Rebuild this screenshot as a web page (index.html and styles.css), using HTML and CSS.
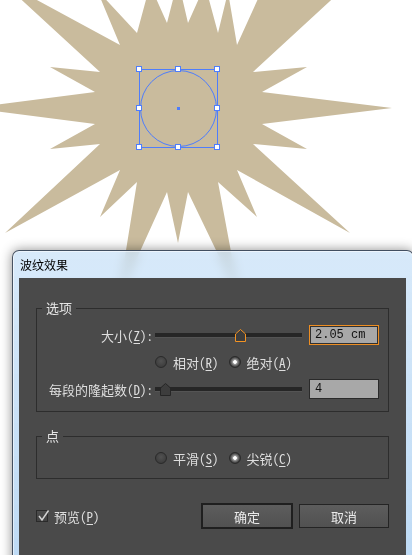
FILE: index.html
```html
<!DOCTYPE html>
<html lang="zh-CN">

<head>
    <meta charset="UTF-8">
    <meta name="viewport" content="width=device-width, initial-scale=1.0">
    <title>波纹效果</title>
    <link rel="stylesheet" href="styles.css">
</head>

<body>
    <div class="stage">
        <!-- Artboard: star with the selected circle -->
        <svg class="artboard" width="412" height="320" viewBox="0 0 412 320">
            <polygon class="star" points="0,-20 120,45 97,-10 137,33 150,-15 167,23 178,-20 188,23 205,-15 218,33 228,-8 237,45 262,-10 342,-10 253,72 307,67 262,92 392,108 262,124 307,149 253,144 350,233 237,170 257,217 218,182 240,300 188,192 178,243 167,192 118,300 137,182 100,217 120,170 5,233 100,144 50,149 95,124 -30,108 95,92 50,67 100,72" />
            <g class="selection">
                <rect x="139.5" y="69.5" width="78" height="78" />
                <circle cx="178.5" cy="108.5" r="38" />
                <rect class="center" x="177" y="107" width="3" height="3" />
                <rect class="handle" x="136.5" y="66.5" width="5" height="5" />
                <rect class="handle" x="175.5" y="66.5" width="5" height="5" />
                <rect class="handle" x="214.5" y="66.5" width="5" height="5" />
                <rect class="handle" x="136.5" y="105.5" width="5" height="5" />
                <rect class="handle" x="214.5" y="105.5" width="5" height="5" />
                <rect class="handle" x="136.5" y="144.5" width="5" height="5" />
                <rect class="handle" x="175.5" y="144.5" width="5" height="5" />
                <rect class="handle" x="214.5" y="144.5" width="5" height="5" />
            </g>
        </svg>

        <!-- Dialog window -->
        <div class="window">
            <div class="titlebar">波纹效果</div>

            <div class="panel">
                <fieldset class="group">
                    <legend>选项</legend>

                    <div class="row">
                        <span class="label">大小(<u>Z</u>):</span>
                        <div class="slider">
                            <svg class="thumb active" style="left:85px" width="11" height="13" viewBox="0 0 11 13">
                                <path d="M0.5 12.5 V5 L5.5 0.5 L10.5 5 V12.5 Z" />
                            </svg>
                        </div>
                        <div class="field focus">2.05 cm</div>
                    </div>

                    <div class="row">
                        <div class="choices">
                            <span class="radio"><span class="dot"></span><span>相对(<u>R</u>)</span></span>
                            <span class="radio on"><span class="dot"></span><span>绝对(<u>A</u>)</span></span>
                        </div>
                    </div>

                    <div class="row">
                        <span class="label">每段的隆起数(<u>D</u>):</span>
                        <div class="slider">
                            <svg class="thumb" style="left:10px" width="11" height="13" viewBox="0 0 11 13">
                                <path d="M0.5 12.5 V5 L5.5 0.5 L10.5 5 V12.5 Z" />
                            </svg>
                        </div>
                        <div class="field">4</div>
                    </div>
                </fieldset>

                <fieldset class="group points">
                    <legend>点</legend>
                    <div class="row">
                        <div class="choices">
                            <span class="radio"><span class="dot"></span><span>平滑(<u>S</u>)</span></span>
                            <span class="radio on"><span class="dot"></span><span>尖锐(<u>C</u>)</span></span>
                        </div>
                    </div>
                </fieldset>

                <div class="actions">
                    <label class="check">
                        <span class="box">
                            <svg width="16" height="16" viewBox="0 0 16 16">
                                <path d="M3 8 L6 12 L12.5 2.5" />
                            </svg>
                        </span>
                        <span>预览(<u>P</u>)</span>
                    </label>
                    <button class="btn default">确定</button>
                    <button class="btn">取消</button>
                </div>
            </div>
        </div>
    </div>
</body>

</html>
```

FILE: styles.css
```css
* {
    box-sizing: border-box;
}

body {
    margin: 0;
    background-color: #ffffff;
    font-family: "Noto Sans Mono CJK SC", "Noto Sans CJK SC", sans-serif;
    font-size: 13px;
}

.stage {
    position: relative;
    width: 412px;
    height: 555px;
    overflow: hidden;
}

.artboard {
    position: absolute;
    left: 0;
    top: 0;
}

.star {
    fill: #c9bb9d;
}

.selection {
    fill: none;
    stroke: #4e7dfc;
    stroke-width: 1;
    shape-rendering: crispEdges;
}

.selection circle {
    shape-rendering: auto;
}

.selection .handle {
    fill: #ffffff;
}

.selection .center {
    fill: #4e7dfc;
    stroke: none;
}

/* window frame (aero glass) */
.window {
    position: relative;
    width: 402px;
    height: 330px;
    margin: 250px 0 0 12px;
    padding: 0 7px 0 6px;
    border: 1px solid rgba(35, 45, 60, 0.8);
    border-radius: 7px 7px 0 0;
    background: linear-gradient(to bottom, rgba(200, 225, 248, 0.72), rgba(172, 208, 242, 0.8));
    backdrop-filter: blur(6px);
    box-shadow: 0 0 12px rgba(0, 0, 0, 0.45), inset 0 0 0 1px rgba(255, 255, 255, 0.55);
}

.titlebar {
    display: flex;
    align-items: center;
    height: 27px;
    padding-left: 1px;
    font-family: "Noto Sans CJK SC", sans-serif;
    font-size: 12px;
    color: #000000;
}

.panel {
    height: 302px;
    padding: 22px 17px 0;
    background-color: #4a4a4a;
    color: #dedede;
}

u {
    text-underline-offset: 2px;
}

/* group boxes */
.group {
    margin: 0;
    padding: 9px 9px 12px;
    min-width: 0;
    border: 1px solid #2d2d2d;
}

.group legend {
    margin-left: -4px;
    padding: 0 4px;
    line-height: 16px;
    color: #e6e6e6;
}

.group + .group {
    margin-top: 16px;
}

.points {
    padding: 4px 9px 10px;
}

.row {
    display: flex;
    align-items: center;
    height: 20px;
}

.row + .row {
    margin-top: 7px;
}

.label {
    width: 107px;
    text-align: right;
    white-space: nowrap;
}

/* sliders */
.slider {
    position: relative;
    width: 147px;
    height: 4px;
    margin-left: 2px;
    background-color: #262626;
    box-shadow: 0 1px 0 #545454;
}

.thumb {
    position: absolute;
    top: -4px;
    margin-left: -5px;
}

.thumb path {
    fill: #3d3d3d;
    stroke: #262626;
}

.thumb.active path {
    stroke: #f39324;
}

.field {
    width: 70px;
    height: 20px;
    margin-left: 7px;
    padding-left: 5px;
    border: 1px solid #2a2a2a;
    background-color: #a8a8a8;
    color: #111111;
    font-family: "Liberation Mono", monospace;
    font-size: 12px;
    line-height: 18px;
}

.field.focus {
    border-color: #ee8e22;
    box-shadow: inset 0 0 0 1px #303030;
}

/* radio buttons */
.choices {
    display: flex;
    align-items: center;
    gap: 10px;
    margin-left: 109px;
}

.radio {
    display: flex;
    align-items: center;
    gap: 6px;
    white-space: nowrap;
}

.dot {
    width: 12px;
    height: 12px;
    border: 1px solid #2a2a2a;
    border-radius: 50%;
    background: radial-gradient(circle at 50% 40%, #525252, #363636);
}

.radio.on .dot {
    background: radial-gradient(circle, #ffffff 0 1.5px, #a8a8a8 2px, #6a6a6a 3.5px, #3c3c3c 5px);
}

/* bottom row */
.actions {
    display: flex;
    align-items: center;
    height: 26px;
    margin-top: 24px;
}

.check {
    display: flex;
    align-items: center;
    gap: 6px;
    white-space: nowrap;
}

.check .box {
    position: relative;
    width: 12px;
    height: 12px;
    border: 1px solid #2a2a2a;
    background: linear-gradient(#4c4c4c, #424242);
}

.check .box svg {
    position: absolute;
    left: -1px;
    top: -3px;
}

.check .box path {
    fill: none;
    stroke: #d2d2d2;
    stroke-width: 1.5;
}

.btn {
    width: 90px;
    height: 24px;
    margin-left: 6px;
    padding: 0;
    border: 1px solid #242424;
    background: linear-gradient(#5d5d5d, #515151);
    color: #eaeaea;
    font-family: "Noto Sans CJK SC", sans-serif;
    font-size: 13px;
}

.btn.default {
    width: 92px;
    height: 26px;
    margin-left: auto;
    border: 2px solid #1f1f1f;
}
```
